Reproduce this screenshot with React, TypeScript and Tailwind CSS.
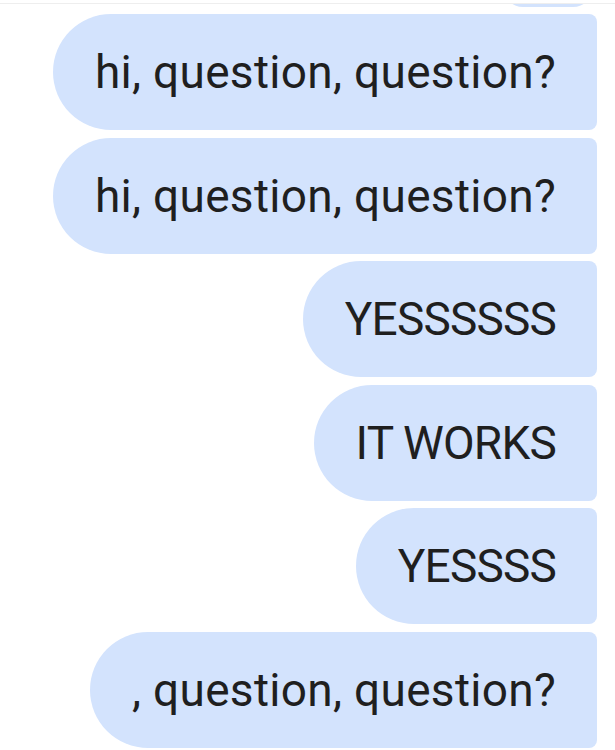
import React from "react";

const messages = [
  { text: "hi, question, question?", caps: false },
  { text: "hi, question, question?", caps: false },
  { text: "YESSSSSS", caps: true },
  { text: "IT WORKS", caps: true },
  { text: "YESSSS", caps: true },
  { text: ", question, question?", caps: false },
];

export default function App() {
  return (
    <div className="w-[615px] h-[750px] overflow-hidden bg-white" style={{ fontFamily: "Roboto, 'Noto Sans', sans-serif" }}>
      <div className="h-[3px]" />
      <div className="h-[1px] bg-[#eeeeee]" />
      <div className="h-[3px] overflow-hidden flex justify-end pr-[22px]">
        <div className="w-[90px] h-[40px] -mt-[37px] rounded-[20px] bg-[#d3e3fd]" />
      </div>
      <div className="flex flex-col items-end gap-[7.5px] pt-[7px] pr-[18px]">
        {messages.map((m, i) => (
          <div
            key={i}
            className={
              "h-[116px] flex items-center pl-[42px] pr-[41px] rounded-l-[58px] rounded-r-[8px] bg-[#d3e3fd] text-[#1f1f1f] text-[46px] font-normal leading-none whitespace-nowrap " +
              (m.caps ? "tracking-[-0.8px]" : "tracking-[0.3px]")
            }
          >
            {m.text}
          </div>
        ))}
      </div>
    </div>
  );
}
